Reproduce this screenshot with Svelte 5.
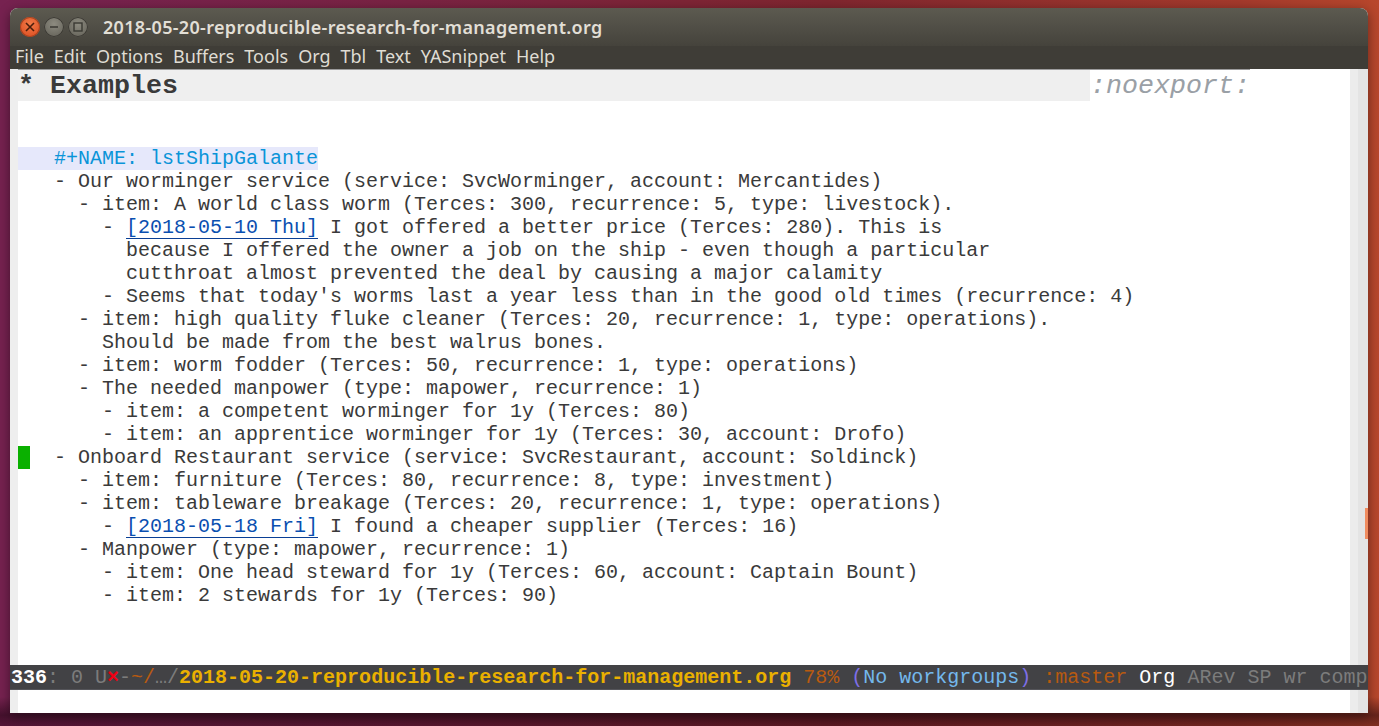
<script>
	const menus = ['File', 'Edit', 'Options', 'Buffers', 'Tools', 'Org', 'Tbl', 'Text', 'YASnippet', 'Help'];

	// each entry: plain text, or date + rest for the lines with a timestamp
	const lines = [
		{ text: '' },
		{ text: '' },
		{ name: true, text: '   #+NAME: lstShipGalante' },
		{ text: '   - Our worminger service (service: SvcWorminger, account: Mercantides)' },
		{ text: '     - item: A world class worm (Terces: 300, recurrence: 5, type: livestock).' },
		{ text: '       - ', date: '[2018-05-10 Thu]', rest: ' I got offered a better price (Terces: 280). This is' },
		{ text: "         because I offered the owner a job on the ship - even though a particular" },
		{ text: '         cutthroat almost prevented the deal by causing a major calamity' },
		{ text: "       - Seems that today's worms last a year less than in the good old times (recurrence: 4)" },
		{ text: '     - item: high quality fluke cleaner (Terces: 20, recurrence: 1, type: operations).' },
		{ text: '       Should be made from the best walrus bones.' },
		{ text: '     - item: worm fodder (Terces: 50, recurrence: 1, type: operations)' },
		{ text: '     - The needed manpower (type: mapower, recurrence: 1)' },
		{ text: '       - item: a competent worminger for 1y (Terces: 80)' },
		{ text: '       - item: an apprentice worminger for 1y (Terces: 30, account: Drofo)' },
		{ cursor: true, text: '  - Onboard Restaurant service (service: SvcRestaurant, account: Soldinck)' },
		{ text: '     - item: furniture (Terces: 80, recurrence: 8, type: investment)' },
		{ text: '     - item: tableware breakage (Terces: 20, recurrence: 1, type: operations)' },
		{ text: '       - ', date: '[2018-05-18 Fri]', rest: ' I found a cheaper supplier (Terces: 16)' },
		{ text: '     - Manpower (type: mapower, recurrence: 1)' },
		{ text: '       - item: One head steward for 1y (Terces: 60, account: Captain Bount)' },
		{ text: '       - item: 2 stewards for 1y (Terces: 90)' }
	];
</script>

<div class="window">
	<header class="titlebar">
		<div class="buttons">
			<span class="btn close">
				<svg width="10" height="10" viewBox="0 0 10 10"><path d="M1 1l8 8M9 1l-8 8" stroke="#4a1d0c" stroke-width="1.6" /></svg>
			</span>
			<span class="btn">
				<svg width="10" height="10" viewBox="0 0 10 10"><path d="M1 5h8" stroke="#3a3933" stroke-width="1.6" /></svg>
			</span>
			<span class="btn">
				<svg width="10" height="10" viewBox="0 0 10 10"><rect x="1" y="1" width="8" height="8" fill="none" stroke="#3a3933" stroke-width="1.4" /></svg>
			</span>
		</div>
		<div class="title">2018-05-20-reproducible-research-for-management.org</div>
	</header>
	<nav class="menubar">
		{#each menus as m}
			<span>{m}</span>
		{/each}
	</nav>

	<div class="frame">
		<div class="gutter"></div>
		<div class="buffer">
			<div class="heading"><b class="stars">* Examples</b><i class="tag">:noexport:</i></div>
			{#each lines as l}
				<div class="line" class:name={l.name}>{#if l.cursor}<span class="cursor"></span>{/if}{l.text}{#if l.date}<span class="date">{l.date}</span>{l.rest}{/if}</div>
			{/each}
		</div>
		<div class="fringe"></div>
		<div class="scrollbar"><div class="thumb"></div></div>
	</div>

	<div class="modeline"><b class="white">336</b><span class="dim">: 0 U</span><b class="red">×</b><span class="dim">-</span><span class="orange">~/</span><span class="dim">…/</span><b class="yellow">2018-05-20-reproducible-research-for-management.org</b> <span class="orange">78%</span> <span class="purple">(</span><span class="blue">No workgroups</span><span class="purple">)</span> <span class="orange">:master</span> <span class="white">Org</span> <span class="dim">ARev SP wr comp</span></div>

	<div class="minibuffer">
		<div class="gutter"></div>
		<div class="echo"></div>
		<div class="fringe"></div>
		<div class="scrollbar"></div>
	</div>
</div>

<style>
	:global(body) {
		margin: 0;
		height: 726px;
		overflow: hidden;
		background:
			linear-gradient(180deg, rgba(0, 0, 0, 0) 96%, rgba(20, 0, 10, 0.5) 98.5%, rgba(20, 0, 10, 0.35) 100%),
			linear-gradient(90deg, #762250 0%, #7a2343 30%, #80262f 60%, #a53a2c 90%, #b8472c 100%);
	}

	.window {
		display: flex;
		flex-direction: column;
		height: 705px;
		margin: 8px 11px 13px 10px;
		border-radius: 8px 8px 0 0;
		overflow: hidden;
		background: #fff;
		box-shadow: 0 3px 12px rgba(0, 0, 0, 0.45);
	}

	.titlebar {
		display: flex;
		align-items: center;
		height: 38px;
		background: linear-gradient(180deg, #5c5a50, #45433c);
	}

	.buttons {
		display: flex;
		gap: 4px;
		margin-left: 10px;
	}

	.btn {
		display: flex;
		align-items: center;
		justify-content: center;
		width: 20px;
		height: 20px;
		border-radius: 50%;
		background: radial-gradient(circle at 50% 35%, #8d8b80, #5f5d54);
		box-shadow: inset 0 0 0 1px #3c3a34;
	}

	.close {
		background: radial-gradient(circle at 50% 35%, #f07a47, #d9481d);
		box-shadow: inset 0 0 0 1px #a8421f;
	}

	.title {
		margin-left: 15px;
		font: 600 18px "Noto Sans", sans-serif;
		letter-spacing: 0.32px;
		color: #e2dfd6;
	}

	.menubar {
		display: flex;
		align-items: center;
		gap: 10px;
		height: 23px;
		box-sizing: border-box;
		padding: 0 0 3px 5px;
		background: #3f3d37;
		font: 18px "Noto Sans", sans-serif;
		color: #dfdcd3;
	}

	.frame {
		display: flex;
		flex: 1;
		min-height: 0;
	}

	.gutter {
		flex: none;
		width: 8px;
		background: #eeeeee;
	}

	.buffer {
		flex: 1;
		min-width: 0;
		font: 20px/23px "Liberation Mono", monospace;
		color: #3a3a3a;
	}

	.heading {
		display: flex;
		height: 32px;
		box-sizing: border-box;
		border-top: 1px solid #9c9c9c;
		width: 1232px;
		font: 26.67px/30px "Liberation Mono", monospace;
	}

	.stars {
		width: 1072px;
		height: 31px;
		padding-top: 1px;
		box-sizing: border-box;
		background: #efefef;
		white-space: pre;
	}

	.tag {
		padding-top: 1px;
		color: #9aa0a6;
	}

	.line {
		height: 23px;
		white-space: pre;
	}

	.name {
		width: 300px;
		background: #e6e8fb;
		color: #0a94d8;
	}

	.cursor {
		display: inline-block;
		width: 12px;
		height: 23px;
		vertical-align: top;
		background: #0ab000;
	}

	.date {
		display: inline-block;
		height: 23px;
		box-sizing: border-box;
		vertical-align: top;
		border-bottom: 1px solid #0a3f95;
		color: #0a4fb0;
	}

	.fringe {
		flex: none;
		width: 8px;
		background: #ececec;
	}

	.scrollbar {
		flex: none;
		width: 10px;
		background: #e4e4e4;
	}

	.thumb {
		width: 3px;
		height: 31px;
		margin: 439px 0 0 7px;
		background: #f08c60;
	}

	.modeline {
		flex: none;
		height: 25px;
		padding-left: 1px;
		overflow: hidden;
		white-space: pre;
		background: #424245;
		border-bottom: 1px solid #55555a;
		box-sizing: border-box;
		font: 20px/26px "Liberation Mono", monospace;
		color: #7c7c7c;
	}

	.white { color: #fff; }
	.dim { color: #7c7c7c; }
	.red { color: #f00014; }
	.orange { color: #b85a10; }
	.yellow { color: #eab000; }
	.purple { color: #7f6fe8; }
	.blue { color: #74b8ec; }

	.minibuffer {
		display: flex;
		flex: none;
		height: 23px;
	}

	.echo {
		flex: 1;
	}
</style>
